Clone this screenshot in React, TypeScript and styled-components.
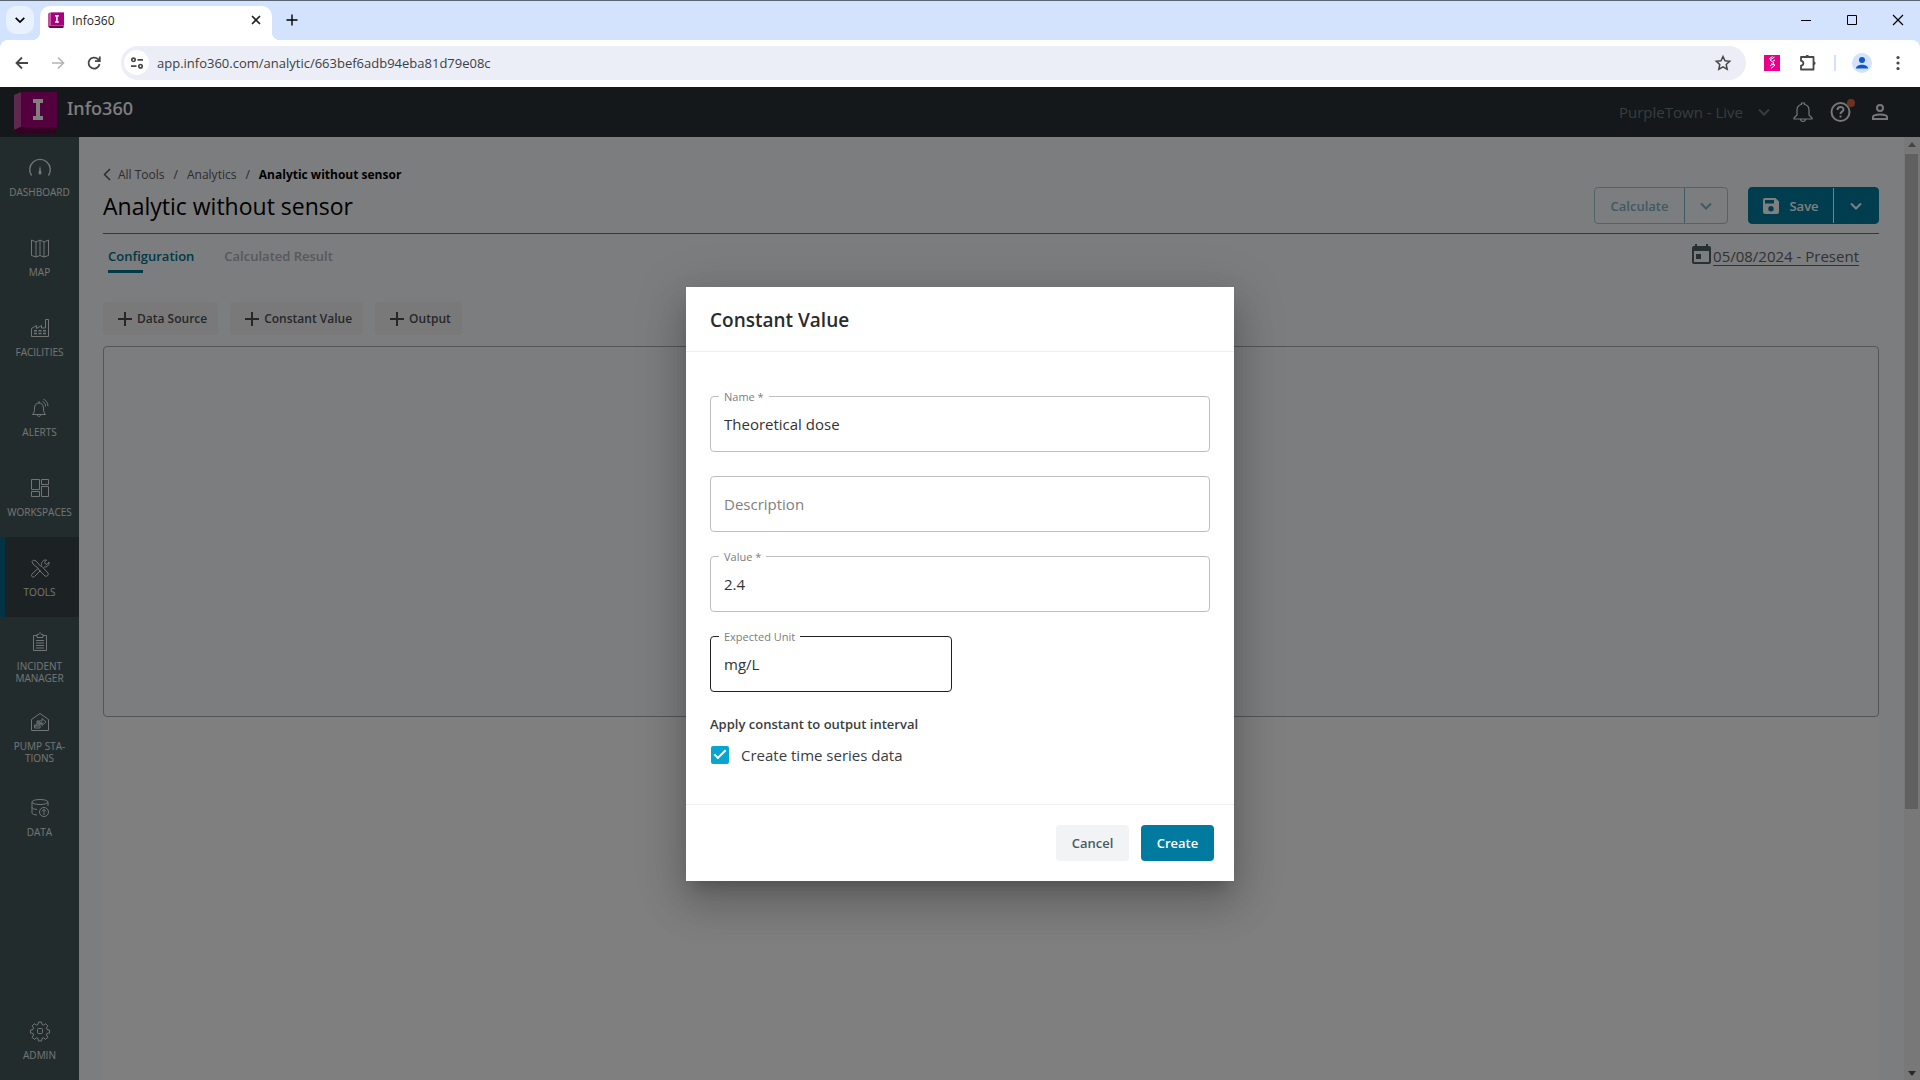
import React, { useState } from "react";
import styled, { createGlobalStyle } from "styled-components";

const sans = `"Open Sans", "Segoe UI", "Noto Sans", sans-serif`;

const GlobalStyle = createGlobalStyle`
  *, *::before, *::after { box-sizing: border-box; }
  body { margin: 0; font-family: ${sans}; font-size: 15px; color: #000; background: #fff; }
  button, input { font-family: inherit; }
  button { cursor: pointer; }
  svg { display: block; flex: none; overflow: visible; }
`;

const Window = styled.div`
  height: 100vh;
  display: flex;
  flex-direction: column;
  overflow: hidden;
`;

/* ---------- browser frame ---------- */

const TabStrip = styled.div`
  flex: none;
  height: 40px;
  display: flex;
  align-items: flex-end;
  padding: 0 8px 0 6px;
  background: #d3e3fd;
  border-top: 1px solid #5b6472;
`;

const TabSearch = styled.button`
  width: 28px;
  height: 28px;
  margin: 0 6px 6px 0;
  display: grid;
  place-items: center;
  border: 0;
  border-radius: 10px;
  background: #e9f1fe;
`;

const BrowserTab = styled.div`
  position: relative;
  width: 232px;
  height: 34px;
  padding: 0 8px 6px;
  display: flex;
  align-items: center;
  gap: 8px;
  background: #fff;
  border-radius: 10px 10px 0 0;
  font-size: 12px;
  color: #1f1f1f;

  &::before, &::after {
    content: "";
    position: absolute;
    bottom: 0;
    width: 8px;
    height: 8px;
  }
  &::before { left: -8px; background: radial-gradient(circle at 0 0, transparent 8px, #fff 8px); }
  &::after { right: -8px; background: radial-gradient(circle at 100% 0, transparent 8px, #fff 8px); }
`;

const TabTitle = styled.span`
  flex: 1;
`;

const PlainButton = styled.button<{ $size?: number }>`
  width: ${(p) => p.$size ?? 28}px;
  height: ${(p) => p.$size ?? 28}px;
  padding: 0;
  display: grid;
  place-items: center;
  flex: none;
  border: 0;
  background: none;
  color: inherit;

  &:disabled { color: #b4b5b7; }
`;

const NewTab = styled(PlainButton)`
  margin: 0 0 6px 6px;
`;

const WindowControls = styled.div`
  margin-left: auto;
  display: flex;
  gap: 18px;
  padding-bottom: 6px;
`;

const Toolbar = styled.div`
  flex: none;
  height: 47px;
  background: #d3e3fd;
`;

const ToolbarInner = styled.div`
  height: 47px;
  padding: 0 12px 2px 8px;
  display: flex;
  align-items: center;
  gap: 8px;
  background: #fff;
  border-radius: 8px 8px 0 0;
  color: #474747;
`;

const AddressBar = styled.div`
  flex: 1;
  height: 34px;
  margin-left: 5px;
  padding: 0 9px 0 3px;
  display: flex;
  align-items: center;
  gap: 8px;
  border-radius: 17px;
  background: #ebeef7;
`;

const SiteInfo = styled(PlainButton)`
  width: 25px;
  height: 25px;
  border-radius: 50%;
  background: #fff;
`;

const AddressInput = styled.input`
  flex: 1;
  min-width: 0;
  padding: 0;
  border: 0;
  outline: 0;
  background: none;
  font-size: 13px;
  color: #3c4043;
`;

const Extensions = styled.div`
  display: flex;
  align-items: center;
  gap: 16px;
  padding-left: 8px;
`;

const Separator = styled.span`
  width: 2px;
  height: 16px;
  background: #d3e3fd;
`;

/* ---------- application ---------- */

const AppArea = styled.div`
  position: relative;
  flex: 1;
  min-height: 0;
  display: flex;
  flex-direction: column;
`;

const Header = styled.header`
  flex: none;
  height: 50px;
  padding: 0 27px 0 14px;
  display: flex;
  align-items: center;
  background: #283136;
`;

const Brand = styled.a`
  display: flex;
  align-items: center;
  gap: 10px;
  color: #fff;
  text-decoration: none;
  font-family: "Noto Sans", sans-serif;
  font-size: 18px;
  font-weight: 500;
`;

const BrandName = styled.span`
  padding-bottom: 8px;
`;

const HeaderRight = styled.div`
  margin-left: auto;
  display: flex;
  align-items: center;
  gap: 13px;
  color: #eee;
`;

const TenantButton = styled.button`
  margin-right: 6px;
  padding: 0;
  display: flex;
  align-items: center;
  gap: 14px;
  border: 0;
  background: none;
  color: #6b7c7b;
  font-size: 15px;
`;

const Body = styled.div`
  flex: 1;
  min-height: 0;
  display: flex;
`;

const Sidebar = styled.nav`
  flex: none;
  width: 79px;
  display: flex;
  flex-direction: column;
  background: #44595a;
`;

const NavItem = styled.a<{ $active?: boolean; $last?: boolean }>`
  height: 80px;
  margin-top: ${(p) => (p.$last ? "auto" : "0")};
  padding: 0 4px;
  display: flex;
  flex-direction: column;
  align-items: center;
  justify-content: center;
  gap: 6px;
  color: #e6e9e9;
  background: ${(p) => (p.$active ? "#384246" : "transparent")};
  box-shadow: ${(p) => (p.$active ? "inset 5px 0 0 #00698a" : "none")};
  font-size: 10px;
  line-height: 12px;
  text-align: center;
  text-decoration: none;
  white-space: pre-line;
`;

const Main = styled.main`
  flex: 1;
  min-width: 0;
  padding: 24px 25px 0 24px;
  display: flex;
  flex-direction: column;
  background: #f9fafc;
`;

const Breadcrumb = styled.nav`
  display: flex;
  align-items: center;
  gap: 9px;
  height: 26px;
  font-size: 12px;
  color: #555;
`;

const Crumb = styled.a<{ $current?: boolean }>`
  display: flex;
  align-items: center;
  gap: 6px;
  color: ${(p) => (p.$current ? "#000" : "#5a5a5a")};
  font-weight: ${(p) => (p.$current ? 700 : 400)};
  text-decoration: none;
`;

const TitleRow = styled.div`
  height: 47px;
  display: flex;
  align-items: flex-start;
  justify-content: space-between;
  border-bottom: 1px solid #6c6e70;
`;

const Title = styled.h1`
  margin: 0;
  font-size: 23px;
  line-height: 38px;
  font-weight: 400;
`;

const Actions = styled.div`
  display: flex;
  gap: 20px;
`;

const Split = styled.div<{ $primary?: boolean }>`
  display: flex;
  height: 37px;
  border-radius: 4px;
  overflow: hidden;
  border: 1px solid ${(p) => (p.$primary ? "#007a9e" : "#9ccbd6")};
  background: ${(p) => (p.$primary ? "#007a9e" : "transparent")};
  color: ${(p) => (p.$primary ? "#fff" : "#7fb5c2")};
`;

const SplitButton = styled.button<{ $width: number }>`
  width: ${(p) => p.$width}px;
  padding: 0;
  display: flex;
  align-items: center;
  justify-content: center;
  gap: 10px;
  border: 0;
  background: none;
  color: inherit;
  font-size: 13px;
  font-weight: 600;

  & + & { border-left: 1px solid currentColor; }
`;

const TabsRow = styled.div`
  display: flex;
  justify-content: space-between;
  align-items: flex-start;
  padding: 10px 20px 0 5px;
`;

const Tabs = styled.div`
  display: flex;
  gap: 30px;
`;

const Tab = styled.button<{ $active?: boolean }>`
  padding: 0;
  border: 0;
  background: none;
  text-align: left;
  font-size: 13px;
  line-height: 24px;
  font-weight: 600;
  color: ${(p) => (p.$active ? "#00728c" : "#b0b2b4")};

  &::after {
    content: "";
    display: block;
    width: 35px;
    height: 3px;
    margin-top: 2px;
    background: ${(p) => (p.$active ? "#00728c" : "transparent")};
  }
`;

const DateLink = styled.a`
  display: flex;
  align-items: flex-start;
  gap: 2px;
  color: #5f6668;
  font-size: 15px;
  line-height: 24px;
  text-underline-offset: 3px;
`;

const NodeButtons = styled.div`
  display: flex;
  gap: 12px;
  margin-top: 29px;
`;

const NodeButton = styled.button`
  height: 33px;
  padding: 0 11px 0 14px;
  display: flex;
  align-items: center;
  gap: 4px;
  border: 0;
  border-radius: 4px;
  background: #f3f3f5;
  color: #4b4f53;
  font-size: 12px;
  font-weight: 600;
`;

const Canvas = styled.section`
  flex: none;
  height: 371px;
  margin-top: 11px;
  border: 1px solid #a9abad;
  border-radius: 4px;
`;

const Blank = styled.div`
  flex: 1;
  background: #fff;
`;

const ScrollTrack = styled.div`
  flex: none;
  width: 16px;
  padding: 5px 2px 4px 1px;
  display: flex;
  flex-direction: column;
  align-items: stretch;
  background: #f1f1f1;
`;

const ScrollArrow = styled.div<{ $down?: boolean }>`
  width: 0;
  height: 5px;
  align-self: center;
  border: 4px solid transparent;
  border-top: ${(p) => (p.$down ? "5px solid #505050" : "0")};
  border-bottom: ${(p) => (p.$down ? "0" : "5px solid #8a8a8a")};
`;

const ScrollRail = styled.div`
  flex: 1;
  margin: 7px 0;
`;

const ScrollThumb = styled.div`
  height: 72%;
  background: #c1c1c1;
`;

/* ---------- dialog ---------- */

const Backdrop = styled.div`
  position: absolute;
  inset: 0;
  display: flex;
  justify-content: center;
  align-items: center;
  padding-top: 1px;
  background: rgba(0, 0, 0, 0.5);
`;

const DialogFrame = styled.form`
  width: 548px;
  background: #fff;
  box-shadow: 0 11px 15px -7px rgba(0, 0, 0, 0.2), 0 24px 38px 3px rgba(0, 0, 0, 0.14),
    0 9px 46px 8px rgba(0, 0, 0, 0.12);
`;

const DialogTitle = styled.h2`
  margin: 0;
  padding: 2px 24px 0;
  font-size: 19px;
  line-height: 62px;
  font-weight: 600;
  color: #2b2b2b;
  border-bottom: 1px solid #eeeff0;
`;

const DialogContent = styled.div`
  padding: 44px 24px 37px;
  display: flex;
  flex-direction: column;
  gap: 24px;
`;

const Field = styled.div<{ $half?: boolean }>`
  position: relative;
  width: ${(p) => (p.$half ? "242px" : "100%")};
`;

const FieldLabel = styled.label`
  position: absolute;
  top: -7px;
  left: 9px;
  padding: 0 5px;
  background: #fff;
  color: #7b7d7e;
  font-size: 11px;
  line-height: 16px;
`;

const FieldInput = styled.input<{ $active?: boolean }>`
  display: block;
  width: 100%;
  height: 56px;
  padding: 0 13px;
  border: 1px solid ${(p) => (p.$active ? "#212121" : "#bdbfc0")};
  border-radius: 4px;
  outline: 0;
  background: #fff;
  color: #333;
  font-size: 15px;

  &::placeholder { color: #808080; opacity: 1; }
`;

const Group = styled.fieldset`
  margin: 0;
  padding: 0;
  border: 0;
`;

const GroupTitle = styled.legend`
  padding: 0;
  font-size: 13px;
  line-height: 16px;
  font-weight: 600;
  color: #3a3d3f;
`;

const CheckRow = styled.label`
  margin-top: 11px;
  display: flex;
  align-items: center;
  gap: 12px;
  font-size: 15px;
  line-height: 24px;
  color: #3a3d3f;
`;

const Checkbox = styled.input`
  appearance: none;
  flex: none;
  width: 18px;
  height: 18px;
  margin: 0 0 0 1px;
  display: grid;
  place-items: center;
  border: 2px solid #8a8a8a;
  border-radius: 2px;

  &:checked { border-color: #06a6d0; background: #06a6d0; }
  &:checked::after {
    content: "";
    width: 12px;
    height: 6px;
    margin-bottom: 4px;
    border: solid #fff;
    border-width: 0 0 2px 2px;
    transform: rotate(-45deg);
  }
`;

const DialogActions = styled.div`
  padding: 20px;
  display: flex;
  justify-content: flex-end;
  gap: 12px;
  border-top: 1px solid #eeeff0;
`;

const ActionButton = styled.button<{ $primary?: boolean }>`
  min-width: 73px;
  height: 36px;
  padding: 0 15px;
  border: 0;
  border-radius: 4px;
  background: ${(p) => (p.$primary ? "#007a9e" : "#f2f3f5")};
  color: ${(p) => (p.$primary ? "#fff" : "#4a5a62")};
  font-size: 13px;
  font-weight: 600;
`;

/* ---------- icons ---------- */

type IconProps = { size?: number; width?: number; box?: number; children: React.ReactNode };

const Line = ({ size = 18, width = 1, box = 18, children }: IconProps) => (
  <svg width={size} height={size} viewBox={`0 0 ${box} ${box}`} fill="none" stroke="currentColor" strokeWidth={width} aria-hidden="true">
    {children}
  </svg>
);

const Chevron = ({ size = 14, width = 2 }: { size?: number; width?: number }) => (
  <Line size={size} width={width} box={14}><path d="M2 4.5l5 5 5-5" /></Line>
);

const Logo = ({ size }: { size: number }) => (
  <svg width={size} height={size} viewBox="0 0 43 43" aria-hidden="true">
    <path d="M0 4L7 1v35l-7 3z" fill="#c2509f" />
    <path d="M7 1h36v35H7z" fill="#a8007c" />
    <path d="M7 36h36l-2 7H5L0 39z" fill="#6b0049" />
    <path d="M19 8h10v4h-3v13h3v4H19v-4h3V12h-3z" fill="#fff" />
  </svg>
);

const navItems: { label: string; icon: React.ReactNode }[] = [
  {
    label: "DASHBOARD",
    icon: (
      <Line size={24} box={24} width={1.4}>
        <path d="M3.500 19.500A10.300 10.300 0 1 1 20.500 19.500" />
        <path d="M12 9.500l1.500 7.500a1.500 1.500 0 0 1-3 0z" fill="currentColor" stroke="none" />
      </Line>
    ),
  },
  {
    label: "MAP",
    icon: (
      <Line size={24} box={24}>
        <path d="M3.500 4l4.500 2 4-2 4 2 4.500-2v15.500L16 21l-4-1.500L8 21l-4.500-1.500zM8 6v15M12 4v15.500M16 6v15" />
      </Line>
    ),
  },
  {
    label: "FACILITIES",
    icon: (
      <Line size={24} box={24}>
        <path d="M3.500 20.500v-8l5-3v3l5-3v2.500h4V3.500h3v17z" />
        <path d="M6 14.800h3M10.500 14.800h3M15 14.800h3M6 17.500h3M10.500 17.500h3M15 17.500h3" strokeWidth={1.5} />
      </Line>
    ),
  },
  {
    label: "ALERTS",
    icon: (
      <Line size={24} box={24}>
        <path d="M4.500 18.500c2-2 2-4 2-6.500 0-3 2-5 4.500-5s4.500 2 4.500 5 0 4.500 2 6.500zM9 18.500c.3 2.500 3.700 2.500 4 0M11 7V5M14.500 5.500c2 .8 3 2.500 3.200 5M15.500 3.200c2.500 1 4.300 3.300 4.500 7" />
      </Line>
    ),
  },
  {
    label: "WORKSPACES",
    icon: (
      <Line size={24} box={24}>
        <path d="M3.500 3.500h8v10h-8zM13.500 3.500h7v5h-7zM3.500 15.500h8v5h-8zM13.500 10.500h7v10h-7z" />
      </Line>
    ),
  },
  {
    label: "TOOLS",
    icon: (
      <Line size={24} box={24}>
        <path d="M4 5.500L5.500 4l2.500 1 4.500 5 1.500.5 6 6.500c1 2-1 4-3 3l-6-6-.5-1.500L5 8z" />
        <path d="M10 12.500l-6 5.500c-1.500 2 .5 4 2.500 2.500l6-6M13.500 9.500c-.5-3 1.500-6 5-5.500l-2 2.500 1 1.500 1.500.5L21 6c.5 3-2 5.500-5 5" />
      </Line>
    ),
  },
  {
    label: "INCIDENT\nMANAGER",
    icon: (
      <Line size={24} box={24}>
        <path d="M9 5.500H5.500v15h13v-15H15M9 4.500h1.500c0-2 3-2 3 0H15v3H9zM8 10.500h8M8 13h8M8 15.500h8M8 18h8" />
      </Line>
    ),
  },
  {
    label: "PUMP STA-\nTIONS",
    icon: (
      <Line size={24} box={24}>
        <path d="M3.500 9.500L12 3.500l8.500 6v11h-17z" />
        <path d="M6.500 18v-3h2.500v-4h5V8.500l4 3.500-4 3.500v-2h-2V18zM9 13h6M7 16h4M11 11v5" />
      </Line>
    ),
  },
  {
    label: "DATA",
    icon: (
      <Line size={24} box={24}>
        <ellipse cx="12" cy="6" rx="8" ry="2.500" />
        <path d="M4 6v11c0 1 2 1.700 5 2M4 11.500c0 1 2 1.700 5 2M20 6v4" />
        <circle cx="16" cy="16" r="4.500" />
        <path d="M16 19v-5.500M14 15.300l2-2 2 2" />
      </Line>
    ),
  },
];

const gear = (
  <Line size={24} box={24}>
    <path d="M10.500 3.500h3l.5 2.500 1.500.6 2.200-1.400 2.100 2.100-1.400 2.200.6 1.500 2.500.5v3l-2.500.5-.6 1.500 1.400 2.200-2.100 2.100-2.200-1.400-1.500.6-.5 2.500h-3l-.5-2.500-1.500-.6-2.200 1.400-2.100-2.100 1.400-2.200-.6-1.500-2.500-.5v-3l2.500-.5.6-1.500-1.400-2.200 2.100-2.100 2.200 1.400 1.500-.6z" transform="translate(0 -.5)" />
    <rect x="9.500" y="9.500" width="5" height="5" rx="1" />
  </Line>
);

const Plus = () => (
  <Line size={16} box={16} width={2}><path d="M8 1v14M1 8h14" /></Line>
);

/* ---------- page ---------- */

function BrowserFrame() {
  return (
    <>
      <TabStrip>
        <TabSearch aria-label="Search tabs"><Chevron size={12} /></TabSearch>
        <BrowserTab>
          <Logo size={16} />
          <TabTitle>Info360</TabTitle>
          <PlainButton $size={16} aria-label="Close tab">
            <Line size={10} box={10} width={1.6}><path d="M1 1l8 8M9 1l-8 8" /></Line>
          </PlainButton>
        </BrowserTab>
        <NewTab aria-label="New tab">
          <Line size={12} box={12} width={1.4}><path d="M6 .5v11M.5 6h11" /></Line>
        </NewTab>
        <WindowControls>
          <PlainButton aria-label="Minimize"><Line size={12} box={12}><path d="M1 6.500h10" /></Line></PlainButton>
          <PlainButton aria-label="Maximize"><Line size={12} box={12}><path d="M1.500 1.500h9v9h-9z" /></Line></PlainButton>
          <PlainButton aria-label="Close"><Line size={12} box={12} width={1.2}><path d="M1 1l10 10M11 1L1 11" /></Line></PlainButton>
        </WindowControls>
      </TabStrip>
      <Toolbar>
        <ToolbarInner>
          <PlainButton aria-label="Back"><Line size={14} box={14} width={1.8}><path d="M13 7H2M7 1.500L1.500 7 7 12.500" /></Line></PlainButton>
          <PlainButton aria-label="Forward" disabled><Line size={14} box={14} width={1.6}><path d="M1 7h11M7 1.500L12.500 7 7 12.500" /></Line></PlainButton>
          <PlainButton aria-label="Reload"><Line size={14} box={14} width={1.8}><path d="M12.500 8A5.500 5.500 0 1 1 11 3.200L12.500 5M12.800.5V5.200H8" /></Line></PlainButton>
          <AddressBar>
            <SiteInfo aria-label="Site information">
              <Line size={14} box={14} width={1.7}><circle cx="3.500" cy="3.800" r="1.700" /><path d="M7.500 3.800H13M1 10.200h5.500" /><circle cx="10.500" cy="10.200" r="1.700" /></Line>
            </SiteInfo>
            <AddressInput aria-label="Address" defaultValue="app.info360.com/analytic/663bef6adb94eba81d79e08c" />
            <PlainButton aria-label="Bookmark">
              <Line size={16} box={16} width={1.5}><path d="M8 1.500l2 4.300 4.700.5-3.500 3.200 1 4.700L8 11.800l-4.200 2.400 1-4.700L1.300 6.300 6 5.800z" /></Line>
            </PlainButton>
          </AddressBar>
          <Extensions>
            <PlainButton $size={20} aria-label="Extension">
              <svg width="16" height="16" viewBox="0 0 16 16"><path d="M0 0h16v16H0z" fill="#e6008c" /><path d="M10.500 2L6 5l4 3-4 3M11 5l-2 1.200M7 9l4 1-4 3.500M8.500 1.500L5 4" stroke="#fff" fill="none" /></svg>
            </PlainButton>
            <PlainButton $size={20} aria-label="Extensions">
              <svg width="18" height="18" viewBox="0 0 18 18" fill="none" stroke="currentColor" strokeWidth="1.800" strokeLinejoin="round">
                <path d="M2 3h12.500v12.500H2v-3.800c3.200-.4 3.200-4.500 0-4.900z" />
                <path d="M6.500 2.500c0-2 3.500-2 3.500 0zM15 7.500c2 0 2 3.500 0 3.500z" fill="currentColor" stroke="none" />
              </svg>
            </PlainButton>
            <Separator />
            <PlainButton $size={20} aria-label="Profile">
              <svg width="20" height="20" viewBox="0 0 20 20"><circle cx="10" cy="10" r="10" fill="#d3e3fd" /><circle cx="10" cy="7" r="3" fill="#0b57d0" /><path d="M4 15.500c0-5 12-5 12 0z" fill="#0b57d0" /></svg>
            </PlainButton>
            <PlainButton $size={20} aria-label="Menu">
              <svg width="4" height="16" viewBox="0 0 4 16" fill="#474747"><circle cx="2" cy="2.500" r="1.600" /><circle cx="2" cy="8" r="1.600" /><circle cx="2" cy="13.500" r="1.600" /></svg>
            </PlainButton>
          </Extensions>
        </ToolbarInner>
      </Toolbar>
    </>
  );
}

function ConstantValueDialog() {
  const [checked, setChecked] = useState(true);
  return (
    <Backdrop>
      <DialogFrame role="dialog" aria-labelledby="dialog-title" onSubmit={(e) => e.preventDefault()}>
        <DialogTitle id="dialog-title">Constant Value</DialogTitle>
        <DialogContent>
          <Field>
            <FieldInput id="name" defaultValue="Theoretical dose" />
            <FieldLabel htmlFor="name">Name *</FieldLabel>
          </Field>
          <Field>
            <FieldInput aria-label="Description" placeholder="Description" />
          </Field>
          <Field>
            <FieldInput id="value" defaultValue="2.4" />
            <FieldLabel htmlFor="value">Value *</FieldLabel>
          </Field>
          <Field $half>
            <FieldInput id="unit" $active defaultValue="mg/L" />
            <FieldLabel htmlFor="unit">Expected Unit</FieldLabel>
          </Field>
          <Group>
            <GroupTitle>Apply constant to output interval</GroupTitle>
            <CheckRow>
              <Checkbox type="checkbox" checked={checked} onChange={(e) => setChecked(e.target.checked)} />
              Create time series data
            </CheckRow>
          </Group>
        </DialogContent>
        <DialogActions>
          <ActionButton type="button">Cancel</ActionButton>
          <ActionButton type="submit" $primary>Create</ActionButton>
        </DialogActions>
      </DialogFrame>
    </Backdrop>
  );
}

export default function App() {
  return (
    <Window>
      <GlobalStyle />
      <BrowserFrame />
      <AppArea>
        <Header>
          <Brand href="#"><Logo size={43} /><BrandName>Info360</BrandName></Brand>
          <HeaderRight>
            <TenantButton>PurpleTown - Live<Chevron size={14} /></TenantButton>
            <PlainButton $size={25} aria-label="Notifications">
              <Line size={22} box={22} width={1.2}><path d="M2 18v-1l3-3V9c0-3 2-5 4.500-5.500V2h3v1.500C15 4 17 6 17 9v5l3 3v1zM8.500 18c.2 3.300 4.800 3.300 5 0" /></Line>
            </PlainButton>
            <PlainButton $size={26} aria-label="Help">
              <svg width="26" height="26" viewBox="0 0 26 26" fill="none" stroke="currentColor" strokeWidth="2">
                <circle cx="12.500" cy="13" r="9" />
                <path d="M9.500 11c0-4 6-4 6-.5 0 2-3 2.300-3 4.500M12.500 16.500v2" />
                <circle cx="23" cy="4" r="4" fill="#e0653c" stroke="none" />
              </svg>
            </PlainButton>
            <PlainButton $size={26} aria-label="Account">
              <Line size={18} box={18} width={2}><circle cx="9" cy="5" r="3" /><path d="M2 16v-2c0-3.500 14-3.500 14 0v2z" /></Line>
            </PlainButton>
          </HeaderRight>
        </Header>
        <Body>
          <Sidebar>
            {navItems.map((item) => (
              <NavItem key={item.label} href="#" $active={item.label === "TOOLS"}>
                {item.icon}
                <span>{item.label}</span>
              </NavItem>
            ))}
            <NavItem href="#" $last>{gear}<span>ADMIN</span></NavItem>
          </Sidebar>
          <Main>
            <Breadcrumb aria-label="Breadcrumb">
              <Crumb href="#"><Line size={9} box={9} width={1.5}><path d="M7-1L1.500 4.500 7 10" /></Line>All Tools</Crumb>
              <span>/</span>
              <Crumb href="#">Analytics</Crumb>
              <span>/</span>
              <Crumb href="#" $current>Analytic without sensor</Crumb>
            </Breadcrumb>
            <TitleRow>
              <Title>Analytic without sensor</Title>
              <Actions>
                <Split>
                  <SplitButton $width={89}>Calculate</SplitButton>
                  <SplitButton $width={43} aria-label="Calculate options"><Chevron size={14} /></SplitButton>
                </Split>
                <Split $primary>
                  <SplitButton $width={84}>
                    <svg width="16" height="16" viewBox="0 0 16 16" fill="currentColor"><path fillRule="evenodd" d="M2 0h10.500L16 3.500V14a2 2 0 0 1-2 2H2a2 2 0 0 1-2-2V2a2 2 0 0 1 2-2zM2 2v3.500h9V2zM8 8a2.700 2.700 0 1 0 0 5.400A2.700 2.700 0 0 0 8 8z" /></svg>
                    Save
                  </SplitButton>
                  <SplitButton $width={45} aria-label="Save options"><Chevron size={14} /></SplitButton>
                </Split>
              </Actions>
            </TitleRow>
            <TabsRow>
              <Tabs>
                <Tab $active>Configuration</Tab>
                <Tab>Calculated Result</Tab>
              </Tabs>
              <DateLink href="#">
                <svg width="19" height="20" viewBox="0 0 19 20" fill="#4f6264"><path fillRule="evenodd" d="M3 0h2v2h9V0h2v2h1a2 2 0 0 1 2 2v14a2 2 0 0 1-2 2H2a2 2 0 0 1-2-2V4a2 2 0 0 1 2-2h1zM2 7v11h15V7zM4 10h5v5H4z" /></svg>
                05/08/2024 - Present
              </DateLink>
            </TabsRow>
            <NodeButtons>
              <NodeButton><Plus />Data Source</NodeButton>
              <NodeButton><Plus />Constant Value</NodeButton>
              <NodeButton><Plus />Output</NodeButton>
            </NodeButtons>
            <Canvas aria-label="Analytic canvas" />
            <Blank />
          </Main>
          <ScrollTrack aria-hidden="true">
            <ScrollArrow />
            <ScrollRail><ScrollThumb /></ScrollRail>
            <ScrollArrow $down />
          </ScrollTrack>
        </Body>
        <ConstantValueDialog />
      </AppArea>
    </Window>
  );
}
